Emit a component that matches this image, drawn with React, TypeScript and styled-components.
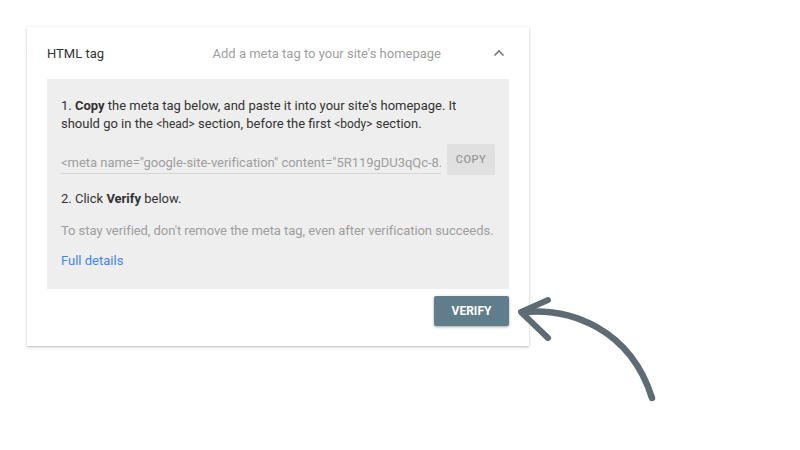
import React from 'react';
import styled, { createGlobalStyle } from 'styled-components';

const Global = createGlobalStyle`
  html, body {
    margin: 0;
    padding: 0;
    background: #ffffff;
    font-family: Roboto, "Liberation Sans", Arial, sans-serif;
  }
`;

const Page = styled.div`
  position: relative;
  width: 800px;
  height: 450px;
  padding: 27px 0 0 27px;
  box-sizing: border-box;
`;

const Card = styled.div`
  width: 502px;
  background: #fff;
  box-shadow: 0 1px 3px rgba(0, 0, 0, 0.22), 0 1px 1px rgba(0, 0, 0, 0.06);
  padding: 0 20px 20px 20px;
  box-sizing: border-box;
`;

const Header = styled.div`
  display: flex;
  align-items: center;
  height: 52px;
  font-size: 13px;
`;

const Title = styled.div`
  flex: 1;
  color: #333;
`;

const Subtitle = styled.div`
  color: #9e9e9e;
`;

const Chevron = styled.div`
  width: 68px;
  display: flex;
  justify-content: flex-end;
  padding-right: 4px;
  box-sizing: border-box;
`;

const Panel = styled.div`
  background: #eeeeee;
  padding: 18px 14px 19px 14px;
  font-size: 13px;
  color: #333;
`;

const Step = styled.p`
  margin: 0;
  line-height: 18px;
  b {
    font-weight: 700;
  }
  code {
    font-family: Roboto, "Liberation Sans", sans-serif;
    font-size: 12px;
  }
`;

const CodeRow = styled.div`
  display: flex;
  align-items: flex-start;
  margin-top: 11px;
`;

const CodeField = styled.div`
  flex: 1;
  color: #9e9e9e;
  font-size: 13px;
  line-height: 15px;
  white-space: nowrap;
  overflow: hidden;
  padding: 11px 0 3px 0;
  border-bottom: 1px solid #d6d6d6;
  margin-right: 6px;
  letter-spacing: -0.03px;
`;

const CopyButton = styled.button`
  width: 48px;
  height: 31px;
  background: #e0e0e0;
  color: #9a9a9a;
  border: none;
  border-radius: 2px;
  font-family: Roboto, "Liberation Sans", sans-serif;
  font-size: 11px;
  font-weight: 500;
  letter-spacing: 0.5px;
  padding: 0;
`;

const StepTwo = styled(Step)`
  margin-top: 15px;
`;

const Note = styled.p`
  margin: 14px 0 0 0;
  line-height: 18px;
  color: #9e9e9e;
  white-space: nowrap;
  letter-spacing: -0.05px;
`;

const Link = styled.a`
  display: inline-block;
  margin-top: 12px;
  color: #4285f4;
  text-decoration: none;
  line-height: 18px;
`;

const Footer = styled.div`
  display: flex;
  justify-content: flex-end;
  margin-top: 7px;
`;

const VerifyButton = styled.button`
  width: 75px;
  height: 30px;
  background: #607d8b;
  color: #fff;
  border: none;
  border-radius: 2px;
  font-family: Roboto, "Liberation Sans", sans-serif;
  font-size: 12px;
  font-weight: 700;
  box-shadow: 0 1px 3px rgba(0, 0, 0, 0.35);
`;

const Arrow = styled.svg`
  position: absolute;
  left: 510px;
  top: 288px;
`;

export default function App() {
  return (
    <Page>
      <Global />
      <Card>
        <Header>
          <Title>HTML tag</Title>
          <Subtitle>Add a meta tag to your site's homepage</Subtitle>
          <Chevron>
            <svg width="12" height="8" viewBox="0 0 12 8">
              <path d="M1.5 6.5 L6 2 L10.5 6.5" fill="none" stroke="#757575" strokeWidth="1.6" />
            </svg>
          </Chevron>
        </Header>
        <Panel>
          <Step>
            1. <b>Copy</b> the meta tag below, and paste it into your site's homepage. It should go in the <code>&lt;head&gt;</code> section, before the first <code>&lt;body&gt;</code> section.
          </Step>
          <CodeRow>
            <CodeField>&lt;meta name="google-site-verification" content="5R119gDU3qQc-8.kXz2vLq" /&gt;</CodeField>
            <CopyButton>COPY</CopyButton>
          </CodeRow>
          <StepTwo>
            2. Click <b>Verify</b> below.
          </StepTwo>
          <Note>To stay verified, don't remove the meta tag, even after verification succeeds.</Note>
          <div>
            <Link href="#">Full details</Link>
          </div>
        </Panel>
        <Footer>
          <VerifyButton>VERIFY</VerifyButton>
        </Footer>
      </Card>
      <Arrow width="160" height="120" viewBox="0 0 160 120">
        <g fill="none" stroke="#5f6b73" strokeLinecap="round" strokeLinejoin="round">
          <path d="M14 24 C60 20 120 40 142 110" strokeWidth="6.5" />
          <path d="M38 12 L11 24 L38 50" strokeWidth="6" />
        </g>
      </Arrow>
    </Page>
  );
}
